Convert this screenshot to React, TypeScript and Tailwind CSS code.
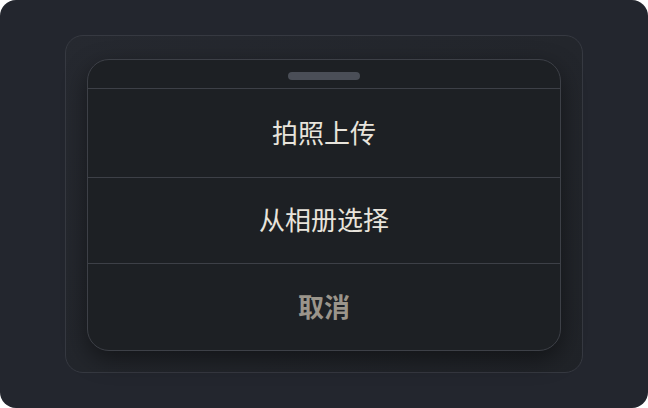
import React from "react";

export default function App() {
  const font = { fontFamily: '"Noto Sans CJK SC", "Noto Sans", sans-serif' };
  return (
    <div className="w-[648px] h-[408px] bg-white">
      <div className="w-full h-full rounded-[16px] bg-[#23262e] pt-[35px] px-[65px]">
        <div className="w-[518px] h-[338px] rounded-[18px] border border-[#363941] bg-gradient-to-br from-[#262930] to-[#202328] pt-[23px] px-[21px]">
          <div
            className="w-[474px] h-[292px] rounded-[22px] border border-[#3d4047] bg-[#1d2024] shadow-[0_8px_24px_rgba(0,0,0,0.45)] flex flex-col overflow-hidden"
            style={font}
          >
            <div className="flex justify-center pt-[12px] pb-[8px]">
              <div className="w-[72px] h-[8px] rounded-full bg-[#4a4e57]" />
            </div>
            <div className="border-t border-[#3d4047] h-[89px] pb-[3px] flex items-center justify-center text-[26px] leading-none text-[#e8e4dc]">
              拍照上传
            </div>
            <div className="border-t border-[#3d4047] h-[86px] pb-[3px] flex items-center justify-center text-[26px] leading-none text-[#e8e4dc]">
              从相册选择
            </div>
            <div className="border-t border-[#3d4047] flex-1 pb-[3px] flex items-center justify-center text-[26px] leading-none font-bold text-[#9b958b]">
              取消
            </div>
          </div>
        </div>
      </div>
    </div>
  );
}
